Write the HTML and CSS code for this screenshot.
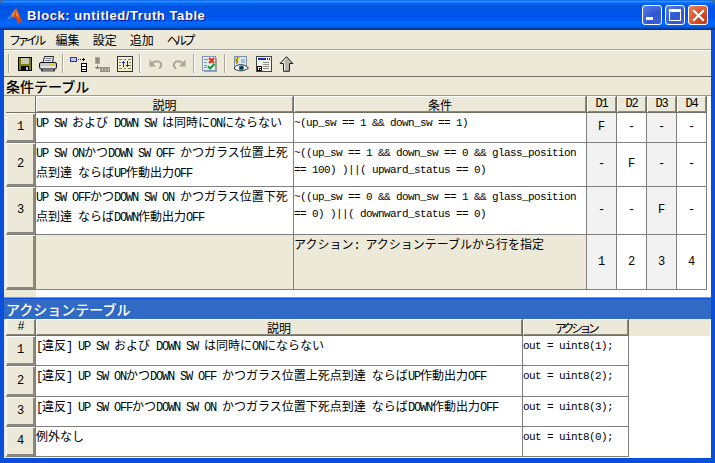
FILE: index.html
```html
<!DOCTYPE html>
<html lang="ja">
<head>
    <meta charset="UTF-8">
    <title>Block: untitled/Truth Table</title>
    <link rel="stylesheet" href="styles.css">
</head>
<body>

<div class="window">
    <div class="titlebar">
        <svg class="logo" width="16" height="16" viewBox="0 0 16 16">
            <path d="M0 10 L4 7 L6.5 8.5 L3 11.5 Z" fill="#3f7fc4"/>
            <path d="M4 7 L8 1.5 L10 .5 L8 7 L6.5 9.5 Z" fill="#ee8030"/>
            <path d="M9 .5 C10.5 .5 12 7 16 14.5 C14 13.5 12.5 14 11 15.5 C10 12 8.5 9.5 6.5 9 L8 5 Z" fill="#d9451b"/>
            <path d="M9.3 1.5 C10 3 10.6 6 12 9.5 L9.5 8 Z" fill="#f7a63c"/>
        </svg>
        <span class="title">Block: untitled/Truth Table</span>
        <div class="caption-btns">
            <div class="cap-btn"><span class="min-glyph"></span></div>
            <div class="cap-btn"><span class="max-glyph"></span></div>
            <div class="cap-btn close">
                <svg width="13" height="13" viewBox="0 0 13 13"><path d="M2 2 L11 11 M11 2 L2 11" stroke="#fff" stroke-width="2.2" stroke-linecap="square"/></svg>
            </div>
        </div>
    </div>

    <div class="menubar">
        <span class="menu-item narrow">ファイル</span>
        <span class="menu-item">編集</span>
        <span class="menu-item">設定</span>
        <span class="menu-item">追加</span>
        <span class="menu-item narrow">ヘルプ</span>
    </div>

    <div class="toolbar">
        <div class="tool-sep"></div>
        <div class="tool">
            <svg width="16" height="16" viewBox="0 0 16 16" shape-rendering="crispEdges">
                <rect x="1" y="1" width="14" height="14" fill="#000"/>
                <rect x="2" y="2" width="12" height="12" fill="#808000"/>
                <rect x="4" y="2" width="8" height="6" fill="#c8c8b8"/>
                <rect x="4" y="10" width="8" height="4" fill="#000"/>
                <rect x="9" y="11" width="2" height="3" fill="#c0c0c0"/>
            </svg>
        </div>
        <div class="tool">
            <svg width="18" height="16" viewBox="0 0 18 16">
                <path d="M5.5 .5 H14.5 L13.5 6.5 H4 Z" fill="#eef2f8" stroke="#222"/>
                <path d="M6.5 2.5 H12.5 M6 4.5 H12" stroke="#6a7a98"/>
                <rect x=".5" y="6.5" width="17" height="6.5" rx="1.5" fill="#c8c8c8" stroke="#111"/>
                <rect x="10" y="8" width="5" height="1.5" fill="#e8c820"/>
                <rect x="2" y="10.5" width="14" height="1" fill="#fff"/>
                <rect x="2" y="13" width="14" height="2.5" fill="#444"/>
                <rect x="4" y="13.5" width="10" height="1" fill="#b0b0b0"/>
            </svg>
        </div>
        <div class="tool-sep"></div>
        <div class="tool">
            <svg width="17" height="16" viewBox="0 0 17 16" shape-rendering="crispEdges">
                <rect x="0" y="1" width="7" height="5" fill="#2030c0"/>
                <rect x="1" y="2" width="5" height="3" fill="#c8c8d8"/>
                <rect x="8" y="3" width="1" height="1" fill="#000"/>
                <rect x="10" y="3" width="1" height="1" fill="#000"/>
                <rect x="12" y="3" width="3" height="1" fill="#000"/>
                <rect x="13" y="2" width="1" height="3" fill="#000"/>
                <rect x="11" y="7" width="6" height="9" fill="#000"/>
                <rect x="12" y="8" width="4" height="2" fill="#fff"/>
                <rect x="12" y="11" width="4" height="2" fill="#fff"/>
                <rect x="12" y="14" width="4" height="1" fill="#fff"/>
            </svg>
        </div>
        <div class="tool">
            <svg width="16" height="16" viewBox="0 0 16 16" shape-rendering="crispEdges">
                <rect x="1" y="1" width="5" height="7" fill="#a8a898"/>
                <rect x="2" y="2" width="3" height="5" fill="#8c8c80"/>
                <rect x="3" y="9" width="1" height="2" fill="#888"/>
                <rect x="1" y="11" width="5" height="1" fill="#888"/>
                <rect x="2" y="12" width="3" height="1" fill="#888"/>
                <rect x="6" y="11" width="10" height="5" fill="#909088"/>
                <rect x="8" y="12" width="1" height="3" fill="#c8c8b8"/>
                <rect x="11" y="12" width="1" height="3" fill="#c8c8b8"/>
                <rect x="14" y="12" width="1" height="3" fill="#c8c8b8"/>
            </svg>
        </div>
        <div class="tool">
            <svg width="16" height="16" viewBox="0 0 16 16" shape-rendering="crispEdges">
                <rect x="0" y="0" width="16" height="16" fill="#333"/>
                <rect x="1" y="1" width="14" height="14" fill="#f4f0d8"/>
                <path d="M2 3 H5 M7 3 H9 M11 3 H14 M2 12 H5 M7 12 H9 M11 12 H14" stroke="#808040"/>
                <path d="M2 6 H4 M2 9 H4 M12 6 H14 M12 9 H14" stroke="#808040"/>
                <path d="M6 5 V11 M10 5 V11" stroke="#1030a0"/>
                <rect x="5" y="6" width="3" height="1" fill="#1030a0"/>
                <rect x="9" y="9" width="3" height="1" fill="#1030a0"/>
            </svg>
        </div>
        <div class="tool-sep"></div>
        <div class="tool">
            <svg width="14" height="12" viewBox="0 0 14 12">
                <path d="M.5 1.5 V8.5 H7 Z" fill="#a6a69a"/>
                <path d="M3.5 5 C6 2.6 10 2.6 11.6 5 C13 7.2 11.8 9.4 10 10.6" fill="none" stroke="#a6a69a" stroke-width="2"/>
            </svg>
        </div>
        <div class="tool">
            <svg width="14" height="12" viewBox="0 0 14 12">
                <path d="M13.5 1.5 V8.5 H7 Z" fill="#a6a69a"/>
                <path d="M10.5 5 C8 2.6 4 2.6 2.4 5 C1 7.2 2.2 9.4 4 10.6" fill="none" stroke="#a6a69a" stroke-width="2"/>
            </svg>
        </div>
        <div class="tool-sep"></div>
        <div class="tool">
            <svg width="15" height="16" viewBox="0 0 15 16" shape-rendering="crispEdges">
                <rect x="0" y="0" width="14" height="15" fill="#8098c0"/>
                <rect x="1" y="1" width="12" height="13" fill="#e4eef8"/>
                <rect x="14" y="2" width="1" height="14" fill="#a0a098"/>
                <rect x="2" y="15" width="13" height="1" fill="#a0a098"/>
                <path d="M2 3 H6 M2 6 H5 M2 9 H5 M2 11 H5" stroke="#8090a8"/>
                <path d="M7 2 L12 7 M12 2 L7 7" stroke="#e03010" stroke-width="2" shape-rendering="auto"/>
                <path d="M6 10 L8 12.5 L12.5 8" fill="none" stroke="#10a030" stroke-width="2" shape-rendering="auto"/>
            </svg>
        </div>
        <div class="tool-sep"></div>
        <div class="tool">
            <svg width="16" height="16" viewBox="0 0 16 16">
                <rect x="1.5" y="0.5" width="12" height="13" fill="#dce8f4" stroke="#7890a8"/>
                <path d="M2 1 H7 L4 7 H2 Z" fill="#f4d020"/>
                <path d="M5 1 L3 5 H5 L3.5 8" fill="none" stroke="#806000"/>
                <path d="M8 4 H12 M8 6 H12" stroke="#8090a8"/>
                <path d="M1 12 C4 7.5 11 7.5 15.5 12 C11 15.8 4 15.8 1 12 Z" fill="#fff" stroke="#333"/>
                <circle cx="8.4" cy="11.8" r="2.6" fill="#20708a"/>
                <circle cx="8.4" cy="11.8" r="1.1" fill="#000"/>
            </svg>
        </div>
        <div class="tool">
            <svg width="16" height="16" viewBox="0 0 16 16" shape-rendering="crispEdges">
                <rect x="0" y="0" width="16" height="16" fill="#444"/>
                <rect x="1" y="1" width="14" height="14" fill="#f0f0e8"/>
                <rect x="2" y="2" width="12" height="2" fill="#1030b0"/>
                <rect x="10" y="2" width="1" height="2" fill="#fff"/>
                <rect x="12" y="2" width="1" height="2" fill="#fff"/>
                <path d="M7 6 H13 M7 8 H13 M7 10 H13 M7 12 H13" stroke="#909088"/>
                <rect x="1" y="10" width="5" height="5" fill="#111"/>
                <rect x="2" y="11" width="3" height="3" fill="#fff"/>
                <rect x="3" y="12" width="1" height="2" fill="#111"/>
                <rect x="3" y="12" width="2" height="1" fill="#111"/>
            </svg>
        </div>
        <div class="tool">
            <svg width="15" height="16" viewBox="0 0 15 16">
                <path d="M7.5 .7 L14 7.5 H10.5 V15.3 H4.5 V7.5 H1 Z" fill="#b4b4ac" stroke="#222"/>
                <path d="M7.5 2.4 L3.5 6.6 H5.5 V14.4" fill="none" stroke="#f0f0e8"/>
            </svg>
        </div>
    </div>

    <div class="section-label">条件テーブル</div>

    <div class="grid-area condition-area">
        <table class="grid">
            <colgroup>
                <col class="c-head"><col class="c-desc"><col class="c-cond">
                <col class="c-d"><col class="c-d"><col class="c-d"><col class="c-d">
            </colgroup>
            <tr class="r-header">
                <th class="corner"></th>
                <th>説明</th>
                <th>条件</th>
                <th class="en-head">D1</th>
                <th class="en-head">D2</th>
                <th class="en-head">D3</th>
                <th class="en-head">D4</th>
            </tr>
            <tr class="r-30">
                <td class="num">1</td>
                <td><span class="en">UP SW </span>および<span class="en"> DOWN SW </span>は同時に<span class="en">ON</span>にならない</td>
                <td class="code">~(up_sw == 1 &amp;&amp; down_sw == 1)</td>
                <td class="d alt">F</td><td class="d">-</td><td class="d alt">-</td><td class="d">-</td>
            </tr>
            <tr class="r-44">
                <td class="num">2</td>
                <td><span class="en">UP SW ON</span>かつ<span class="en">DOWN SW OFF </span>かつガラス位置上死<br>点到達<span class="en"> </span>ならば<span class="en">UP</span>作動出力<span class="en">OFF</span></td>
                <td class="code">~((up_sw == 1 &amp;&amp; down_sw == 0 &amp;&amp; glass_position<br>== 100) )||( upward_status == 0)</td>
                <td class="d alt">-</td><td class="d">F</td><td class="d alt">-</td><td class="d">-</td>
            </tr>
            <tr class="r-48">
                <td class="num">3</td>
                <td><span class="en">UP SW OFF</span>かつ<span class="en">DOWN SW ON </span>かつガラス位置下死<br>点到達<span class="en"> </span>ならば<span class="en">DOWN</span>作動出力<span class="en">OFF</span></td>
                <td class="code">~((up_sw == 0 &amp;&amp; down_sw == 1 &amp;&amp; glass_position<br>== 0) )||( downward_status == 0)</td>
                <td class="d alt">-</td><td class="d">-</td><td class="d alt">F</td><td class="d">-</td>
            </tr>
            <tr class="r-55">
                <td class="num"></td>
                <td class="tan"></td>
                <td class="tan">アクション<span class="en">: </span>アクションテーブルから行を指定</td>
                <td class="d alt">1</td><td class="d">2</td><td class="d alt">3</td><td class="d">4</td>
            </tr>
        </table>
    </div>

    <div class="action-bar">アクションテーブル</div>

    <div class="grid-area action-area">
        <table class="grid">
            <colgroup>
                <col class="c-head"><col class="c-adesc"><col class="c-act"><col class="c-fill">
            </colgroup>
            <tr class="r-header">
                <th class="en-head">#</th>
                <th>説明</th>
                <th class="narrow">アクション</th>
                <th class="filler"></th>
            </tr>
            <tr class="r-30">
                <td class="num">1</td>
                <td><span class="en">[</span>違反<span class="en">] UP SW </span>および<span class="en"> DOWN SW </span>は同時に<span class="en">ON</span>にならない</td>
                <td class="code">out = uint8(1);</td>
            </tr>
            <tr class="r-31">
                <td class="num">2</td>
                <td><span class="en">[</span>違反<span class="en">] UP SW ON</span>かつ<span class="en">DOWN SW OFF </span>かつガラス位置上死点到達<span class="en"> </span>ならば<span class="en">UP</span>作動出力<span class="en">OFF</span></td>
                <td class="code">out = uint8(2);</td>
            </tr>
            <tr class="r-30">
                <td class="num">3</td>
                <td><span class="en">[</span>違反<span class="en">] UP SW OFF</span>かつ<span class="en">DOWN SW ON </span>かつガラス位置下死点到達<span class="en"> </span>ならば<span class="en">DOWN</span>作動出力<span class="en">OFF</span></td>
                <td class="code">out = uint8(3);</td>
            </tr>
            <tr class="r-30">
                <td class="num">4</td>
                <td>例外なし</td>
                <td class="code">out = uint8(0);</td>
            </tr>
        </table>
    </div>
</div>

</body>
</html>
```

FILE: styles.css
```css
html, body {
    margin: 0;
    height: 100%;
    background: #3a6ea5;
    overflow: hidden;
}
.window {
    box-sizing: border-box;
    width: 715px;
    height: 463px;
    display: flex;
    flex-direction: column;
    padding: 0 4px 5px 4px;
    background: #0a4fdc;
    border-radius: 7px 7px 0 0;
    font-family: "Noto Sans CJK JP", sans-serif;
    font-size: 12px;
    color: #000;
    overflow: hidden;
}

/* title bar */
.titlebar {
    height: 30px;
    flex: none;
    margin: 0 -4px;
    padding: 0 7px 0 7px;
    display: flex;
    align-items: center;
    background: linear-gradient(180deg, #0058ee 0, #3593ff 4%, #288eff 6%, #127dff 8%, #036ffc 10%, #0262ee 14%, #0057e5 20%, #0054e3 24%, #0055eb 56%, #005bf5 66%, #026afe 76%, #0062ef 86%, #0052d6 92%, #0040ab 94%, #003092 100%);
}
.logo {
    flex: none;
    margin: 1px 4px 0 0;
}
.title {
    font-family: "Liberation Sans", sans-serif;
    font-weight: bold;
    font-size: 13px;
    letter-spacing: .57px;
    color: #fff;
    text-shadow: 1px 1px #0f1089;
}
.caption-btns {
    margin-left: auto;
    display: flex;
    gap: 3px;
}
.cap-btn {
    box-sizing: border-box;
    width: 20px;
    height: 20px;
    border: 1px solid #fff;
    border-radius: 3px;
    display: flex;
    align-items: center;
    justify-content: center;
    background: radial-gradient(circle at 85% 85%, #3b5fd8 0, #2f55d0 40%, #5a84ec 100%);
}
.cap-btn.close {
    background: radial-gradient(circle at 85% 85%, #c43a14 0, #d84e26 45%, #ec8a68 100%);
}
.min-glyph {
    width: 7px;
    height: 3px;
    background: #fff;
    margin: 7px 6px 0 0;
}
.max-glyph {
    box-sizing: border-box;
    width: 12px;
    height: 12px;
    border: 1px solid #fff;
    border-top-width: 3px;
}

/* menu and toolbar */
.menubar {
    height: 19px;
    flex: none;
    display: flex;
    align-items: center;
    padding-left: 5px;
    gap: 13px;
    background: #ece9d8;
    border-bottom: 1px solid #a3a194;
}
.narrow {
    letter-spacing: -3.6px;
}
.toolbar {
    height: 25px;
    flex: none;
    display: flex;
    align-items: center;
    padding-left: 1px;
    background: #ece9d8;
    border-top: 1px solid #fff;
    border-bottom: 1px solid #716f64;
}
.tool {
    width: 23px;
    height: 22px;
    display: flex;
    align-items: center;
    justify-content: center;
}
.tool-sep {
    box-sizing: border-box;
    width: 8px;
    height: 19px;
    background: linear-gradient(90deg, transparent 3px, #aca899 3px, #aca899 4px, #fff 4px, #fff 5px, transparent 5px);
}

/* tables */
.section-label {
    height: 18px;
    flex: none;
    padding-left: 2px;
    background: #ece9d8;
    font-size: 14px;
    font-weight: 500;
    line-height: 19px;
}
.grid-area {
    padding-left: 2px;
    background: linear-gradient(90deg, #ece9d8 32px, #fff 32px);
}
.condition-area {
    height: 201px;
    flex: none;
    border-top: 1px solid #8c9cb0;
    border-bottom: 1px solid #9a9a94;
}
.action-area {
    flex: 1;
}
.grid {
    border-collapse: separate;
    border-spacing: 0;
    table-layout: fixed;
    width: 0;
}
.c-head { width: 30px; }
.c-desc { width: 258px; }
.c-cond { width: 293px; }
.c-d { width: 30px; }
.c-adesc { width: 487px; }
.c-act { width: 106px; }
.c-fill { width: 81px; }
.r-header { height: 17px; }
.r-30 { height: 30px; }
.r-31 { height: 31px; }
.r-44 { height: 44px; }
.r-48 { height: 48px; }
.r-55 { height: 55px; }
th {
    box-sizing: border-box;
    padding: 0;
    font-weight: normal;
    text-align: center;
    line-height: 15px;
    background: #ece9d8;
    box-shadow: inset 1px 1px #fff, inset -1px -1px #8a897c;
    border-right: 1px solid #716f64;
    border-bottom: 1px solid #716f64;
    white-space: nowrap;
    overflow: hidden;
}
th.corner {
    box-shadow: none;
}
th.filler {
    box-shadow: none;
    border: 0;
}
th.en-head {
    font-family: "Liberation Mono", monospace;
    letter-spacing: -1.2px;
}
td {
    box-sizing: border-box;
    padding: 0;
    vertical-align: top;
    line-height: 17px;
    background: #fff;
    border-right: 1px solid #808080;
    border-bottom: 1px solid #808080;
    white-space: nowrap;
    overflow: hidden;
}
td.num {
    vertical-align: middle;
    text-align: center;
    font-family: "Liberation Mono", monospace;
    background: #ece9d8;
    box-shadow: inset 1px 1px #fff, inset -2px -2px #8a897c;
}
td.tan {
    background: #ece9d8;
}
td.code {
    padding-top: 2px;
    font-family: "Liberation Mono", monospace;
    font-size: 11px;
    letter-spacing: -.6px;
    white-space: pre;
}
td.d {
    vertical-align: middle;
    text-align: center;
    font-family: "Liberation Mono", monospace;
}
td.alt {
    background: #f2f2f2;
}
.en {
    font-family: "Liberation Mono", monospace;
    letter-spacing: -1.2px;
    white-space: pre;
}
.action-bar {
    height: 20px;
    flex: none;
    margin-top: 1px;
    padding-left: 2px;
    background: #316ac5;
    color: #fff;
    font-size: 14px;
    font-weight: 500;
    line-height: 20px;
}
```
